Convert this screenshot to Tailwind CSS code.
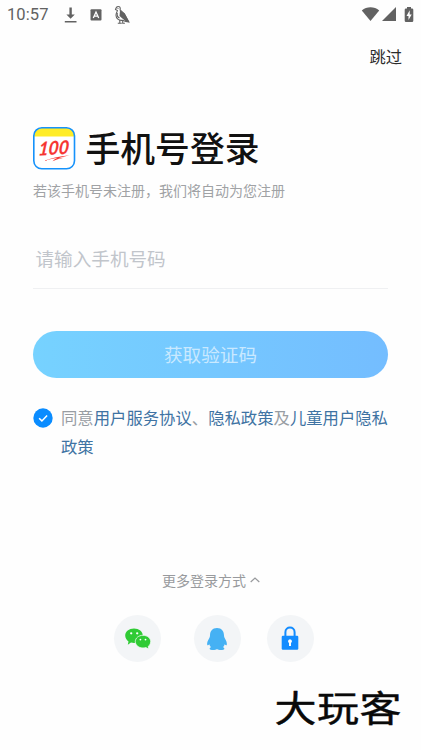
<!DOCTYPE html>
<html lang="zh-CN">
<head>
<meta charset="utf-8">
<title>手机号登录</title>
<script src="https://cdn.jsdelivr.net/npm/@tailwindcss/browser@4"></script>
</head>
<body class="bg-white">
<div class="w-[421px] h-[750px] flex flex-col overflow-hidden bg-[#fefefe] font-['Noto_Sans_CJK_SC',sans-serif]">
  <!-- Status bar -->
  <header class="h-[30px] shrink-0 flex items-center justify-between pl-[7px] pr-[7px] text-[#626262]">
    <div class="flex items-center">
      <span class="w-[57px] font-['Roboto',sans-serif] text-[16.5px] leading-[30px] tracking-[0.1px]">10:57</span>
      <svg class="w-[13px] h-[18px]" viewBox="0 0 13 18" fill="currentColor"><path d="M5.400 1.500h2.400v7h3L6.600 12.800 2.400 8.500h3zM.8 15h11.700v1.500H.8z"/></svg>
      <svg class="ml-[13px] w-[12px] h-[12px]" viewBox="0 0 12 12"><rect x=".5" y=".2" width="11" height="11.300" rx="1" fill="currentColor"/><path d="M3.300 9 6 3l2.700 6M4.200 7.200h3.600" stroke="#fff" stroke-width="1.300" fill="none"/></svg>
      <svg class="ml-[12px] w-[16px] h-[20px]" viewBox="0 0 16 20"><path d="M1.500 4.500C2 2.500 3 1.200 4.600 1.500c2 .3 1.700 2.300 1.500 3.500l4 3.500 4.700 8.500-3-.6-3.300-1.200c-3.700.7-6.500-1.900-6.500-5 0-1.800 1.100-3.200 1.400-4.700z" stroke="currentColor" stroke-width="1.100" fill="#fff"/><path d="M6 5.500 10.800 8.500 15.300 17l-4-1-5.800-5z" fill="currentColor"/><path d="M5.800 15v3m-2 .3h4M8.700 15v3.200h2.200M3.300 8c-.4 2 .2 4 2.200 5" stroke="currentColor" stroke-width="1.100" fill="none"/><circle cx="4" cy="3.300" r=".6" fill="currentColor"/></svg>
    </div>
    <div class="relative -top-px flex items-center">
      <svg class="w-[19px] h-[16px]" viewBox="0 0 19 16" fill="currentColor"><path d="M.8 4.500C5.700.3 13.300.3 18.200 4.500L9.500 15z"/></svg>
      <svg class="ml-[1px] w-[16px] h-[16px]" viewBox="0 0 16 16" fill="currentColor"><path d="M15 1v14H1z"/></svg>
      <svg class="ml-[7px] w-[10px] h-[17px]" viewBox="0 0 10 17"><path d="M3 1h4v1.500h1q1.300 0 1.300 1.300v11q0 1.300-1.300 1.300H2Q.7 16.100.7 14.800v-11Q.7 2.500 2 2.500h1z" fill="currentColor"/><path d="M5.700 4.300 2.500 9.900h2v4l3.200-5.500h-2z" fill="#fff"/></svg>
    </div>
  </header>

  <div class="mt-[13px] flex justify-end pr-[19px]">
    <button class="text-[16.3px] leading-[26px] text-[#2b2b2b]">跳过</button>
  </div>

  <main class="mt-[53px] px-[33px]">
    <div class="flex items-center h-[50px]">
      <svg class="mt-[3px] w-[43px] h-[43px]" viewBox="0 0 43 43">
        <defs><clipPath id="badge"><rect x="1" y="1" width="41" height="41" rx="8"/></clipPath></defs>
        <rect x="1" y="1" width="41" height="41" rx="8" fill="#fff"/>
        <rect width="43" height="9.500" fill="#ffec27" clip-path="url(#badge)"/>
        <rect x=".8" y=".8" width="40.700" height="41" rx="8" fill="none" stroke="#1592fb" stroke-width="1.600"/>
        <text x="5.500" y="27.600" textLength="30.500" lengthAdjust="spacingAndGlyphs" transform="rotate(-3 20 22) translate(3.500 0) skewX(-9)" font-family="Lato, sans-serif" font-style="italic" font-weight="700" font-size="18.500" fill="#f63531" stroke="#f63531" stroke-width=".2">100</text>
        <path d="M10 34Q21 30 36.500 28.200 28 30 25 31.500 28 30.800 31 30.800 24 32.300 19.500 34.200 21.500 32.200 24.500 30.800 17 32 10 34z" fill="#f63531"/>
      </svg>
      <h1 class="-mt-px ml-[9.500px] text-[34.800px] leading-[50px] font-medium text-[#111]">手机号登录</h1>
    </div>
    <p class="mt-[7px] text-[14px] leading-[22px] text-[#a0a2a5]">若该手机号未注册，我们将自动为您注册</p>
    <div class="mt-[37px] w-[355px] h-[51px] border-b border-[#eff0f2] pl-[2.500px] text-[18.600px] leading-[39px] text-[#c1c5cb]">请输入手机号码</div>
    <button class="mt-[42px] block w-[355px] h-[47px] rounded-full bg-linear-to-r from-[#76d2ff] to-[#74bdff] text-[18.600px] leading-[45px] text-[#c9e9ff]"><span class="relative -top-px">获取验证码</span></button>
    <div class="mt-[26px] flex">
      <svg class="mt-[4px] w-[20px] h-[20px] shrink-0" viewBox="0 0 20 20"><circle cx="10" cy="10" r="9.700" fill="#0a8cff"/><path d="m6.100 10.200 2.800 2.700 5.200-5.400" fill="none" stroke="#fff" stroke-width="1.500"/></svg>
      <p class="-mt-px ml-[8px] text-[16.350px] leading-[29px] whitespace-nowrap text-[#989da3]">同意<a class="text-[#3f73a3]">用户服务协议</a>、<a class="text-[#3f73a3]">隐私政策</a>及<a class="text-[#3f73a3]">儿童用户隐私<br>政策</a></p>
    </div>
  </main>

  <section class="mt-[108px]">
    <div class="flex items-center pl-[162px] text-[14px] leading-[22px] text-[#989a9d]">更多登录方式
      <svg class="ml-[4px] w-[10px] h-[8px]" viewBox="0 0 10 8"><path d="M.7 6 5 2l4.300 4" fill="none" stroke="currentColor" stroke-width="1.200"/></svg>
    </div>
    <div class="mt-[24px] flex pl-[114px]">
      <button class="w-[47px] h-[47px] rounded-full bg-[#f3f5f7] flex items-center justify-center">
        <svg class="w-[28px] h-[24px]" viewBox="0 0 28 24"><path d="M10 1.500c5 0 8.800 3 8.800 7.100s-3.800 7.300-8.800 7.300q-1.500 0-3-.4L3.800 17.800l.7-3.300C2.500 13 1.200 11 1.200 8.600 1.200 4.500 5 1.500 10 1.500z" fill="#30cb35"/><path d="M19 8.300c4.300 0 7.700 2.800 7.700 6.300 0 2-1 3.700-2.500 4.900l.5 2.600-2.800-1.500q-1.300.4-2.900.4c-4.300 0-7.700-2.800-7.700-6.400s3.400-6.300 7.700-6.300z" fill="#30cb35" stroke="#effaf1" stroke-width=".8"/><g fill="#fff"><circle cx="7.200" cy="6.300" r="1.150"/><circle cx="13.200" cy="6.300" r="1.150"/><circle cx="16.400" cy="12.600" r=".9"/><circle cx="21.500" cy="12.600" r=".9"/></g></svg>
      </button>
      <button class="ml-[32.500px] w-[47px] h-[47px] rounded-full bg-[#f3f5f7] flex items-center justify-center">
        <svg class="w-[22px] h-[24px]" viewBox="0 0 22 24"><path d="M11 1c4.700 0 7 3.200 7 7.500 0 1 .3 1.800.8 2.800 1.300 2.200 2.400 4.500 2 6.400-.3 1-1.300.5-2.100-.5-.2 1.100-.8 2.100-1.700 3 1 .4 1.500.9 1.300 1.700-.4 1.300-5.900 1.300-7.300 0-1.400 1.300-6.900 1.300-7.300 0-.2-.8.300-1.300 1.300-1.700-.9-.9-1.500-1.900-1.700-3-.8 1-1.800 1.500-2.100.5-.4-1.900.7-4.200 2-6.400.5-1 .8-1.800.8-2.800C4 4.200 6.300 1 11 1z" fill="#45b1f4"/></svg>
      </button>
      <button class="ml-[26px] w-[47px] h-[47px] rounded-full bg-[#f3f5f7] flex items-center justify-center">
        <svg class="relative -top-px w-[18px] h-[26px]" viewBox="0 0 18 26"><path d="M4.400 12V7.200c0-6.200 9.200-6.200 9.200 0V12" fill="none" stroke="#138cff" stroke-width="2"/><rect x=".7" y="10.700" width="16.600" height="14" rx="1.200" fill="#138cff"/><path d="M9 14.200a2 2 0 0 1 1 3.700v3H8v-3a2 2 0 0 1 1-3.700z" fill="#fff"/></svg>
      </button>
    </div>
    <!-- Wordmark -->
    <svg class="mt-[12px] ml-[265px] w-[150px] h-[72px] overflow-visible" viewBox="0 0 150 72">
      <text transform="translate(9.500 48) scale(1 .86)" textLength="127" font-family="'Noto Sans CJK SC', sans-serif" font-size="42" font-weight="400" fill="#090909" stroke="#090909" stroke-width=".5" stroke-linejoin="round">大玩客</text>
    </svg>
  </section>
</div>
</body>
</html>
